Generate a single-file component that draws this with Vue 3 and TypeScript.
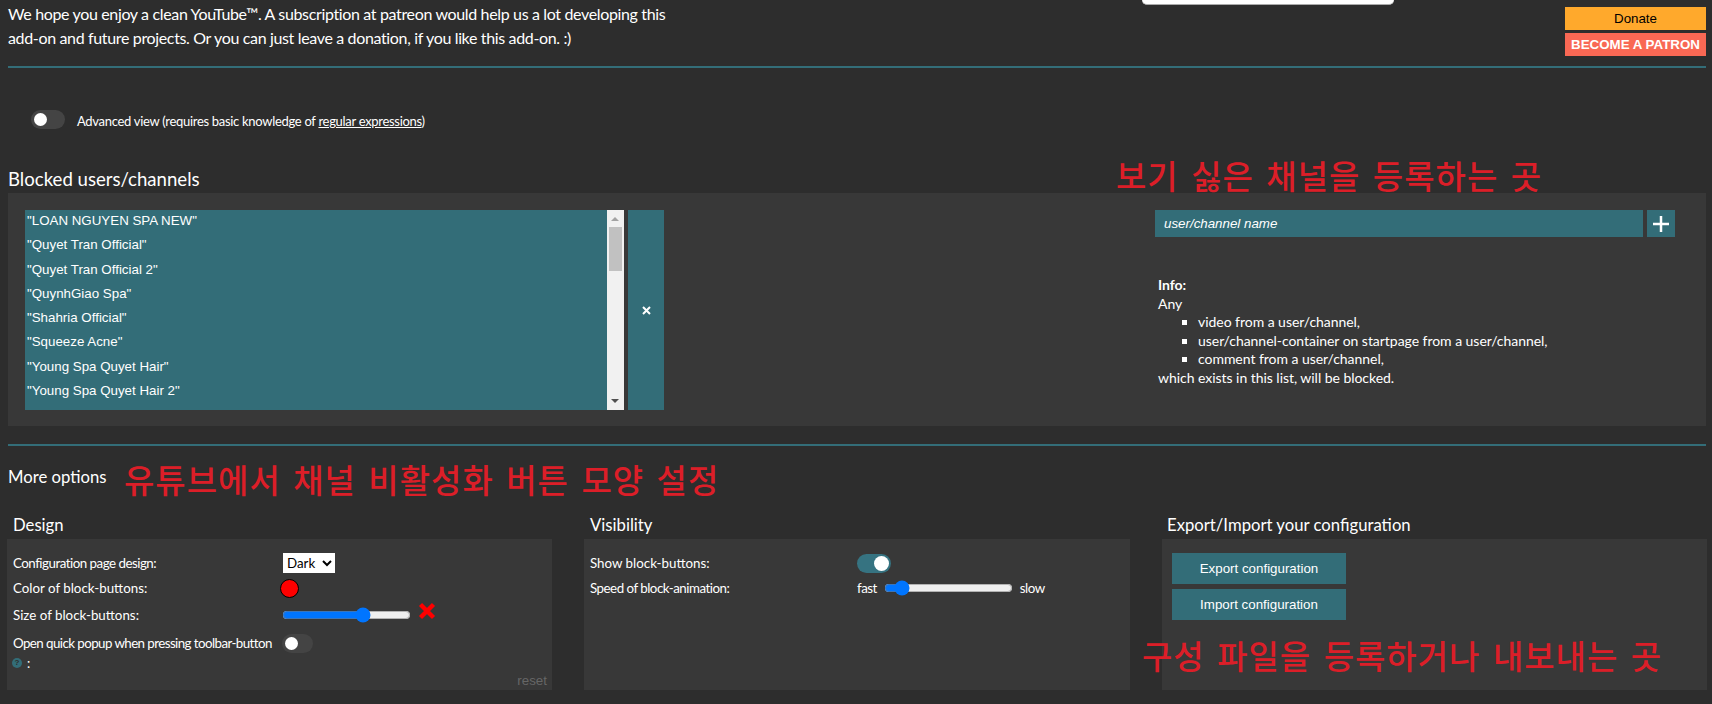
<script setup lang="ts">
const channels: string[] = [
  '"LOAN NGUYEN SPA NEW"',
  '"Quyet Tran Official"',
  '"Quyet Tran Official 2"',
  '"QuynhGiao Spa"',
  '"Shahria Official"',
  '"Squeeze Acne"',
  '"Young Spa Quyet Hair"',
  '"Young Spa Quyet Hair 2"',
]
const infoItems: string[] = [
  'video from a user/channel,',
  'user/channel-container on startpage from a user/channel,',
  'comment from a user/channel,',
]
</script>

<template>
  <div class="page">
    <header class="top">
      <p class="intro">We hope you enjoy a clean YouTube™. A subscription at patreon would help us a lot developing this<br />add-on and future projects. Or you can just leave a donation, if you like this add-on. :)</p>
      <div class="search-stub"></div>
      <div class="support">
        <a class="donate">Donate</a>
        <a class="patron">BECOME A PATRON</a>
      </div>
    </header>
    <hr class="rule" />

    <div class="advanced">
      <span class="toggle"><i class="knob"></i></span>
      <span class="advanced-text">Advanced view (requires basic knowledge of <u>regular expressions</u>)</span>
    </div>

    <h2 class="blocked-title">Blocked users/channels</h2>
    <div class="note note-one">보기 싫은 채널을 등록하는 곳</div>

    <section class="panel blocked">
      <div class="list-wrap">
        <ul class="list">
          <li v-for="c in channels" :key="c">{{ c }}</li>
        </ul>
        <div class="scrollbar">
          <span class="arrow up"></span>
          <span class="thumb"></span>
          <span class="arrow down"></span>
        </div>
      </div>
      <button class="remove" type="button" aria-label="remove">
        <svg width="9" height="9" viewBox="0 0 9 9"><path d="M1 1l7 7M8 1l-7 7" stroke="#fff" stroke-width="2" /></svg>
      </button>
      <div class="right">
        <div class="add-row">
          <div class="name-input">user/channel name</div>
          <button class="add" type="button" aria-label="add">
            <svg width="16" height="16" viewBox="0 0 16 16"><path d="M8 0v16M0 8h16" stroke="#fff" stroke-width="2.5" /></svg>
          </button>
        </div>
        <div class="info">
          <strong>Info:</strong>
          <div>Any</div>
          <ul>
            <li v-for="i in infoItems" :key="i">{{ i }}</li>
          </ul>
          <div>which exists in this list, will be blocked.</div>
        </div>
      </div>
    </section>

    <hr class="rule second" />

    <div class="more">
      <h3>More options</h3>
      <div class="note note-two">유튜브에서 채널 비활성화 버튼 모양 설정</div>
    </div>

    <div class="cols">
      <div class="col">
        <h4>Design</h4>
        <div class="box">
          <div class="row r1">
            <span class="lbl tight">Configuration page design:</span>
            <select class="sel"><option>Dark</option></select>
          </div>
          <div class="row r2">
            <span class="lbl">Color of block-buttons:</span>
            <span class="swatch"></span>
          </div>
          <div class="row r3">
            <span class="lbl">Size of block-buttons:</span>
            <input class="range" type="range" min="0" max="100" value="65" />
            <svg class="cross" width="18" height="18" viewBox="0 0 18 18"><path d="M2.5 2.5l13 13M15.5 2.5l-13 13" stroke="#f00" stroke-width="4.4" /></svg>
          </div>
          <div class="row r4">
            <span class="lbl nowrap">Open quick popup when pressing toolbar-button</span>
            <span class="toggle small"><i class="knob"></i></span>
          </div>
          <div class="help"><span class="q">?</span><span class="colon">:</span></div>
          <span class="reset">reset</span>
        </div>
      </div>

      <div class="col">
        <h4>Visibility</h4>
        <div class="box vis">
          <div class="row r1">
            <span class="lbl">Show block-buttons:</span>
            <span class="toggle on"><i class="knob"></i></span>
          </div>
          <div class="row r2">
            <span class="lbl tight">Speed of block-animation:</span>
            <span class="speed">
              <span class="tight">fast</span>
              <input class="range" type="range" min="0" max="100" value="9" />
              <span class="tight">slow</span>
            </span>
          </div>
        </div>
      </div>

      <div class="col">
        <h4 class="last">Export/Import your configuration</h4>
        <div class="box export">
          <button class="cfg" type="button">Export configuration</button>
          <button class="cfg" type="button">Import configuration</button>
          <div class="note note-three">구성 파일을 등록하거나 내보내는 곳</div>
        </div>
      </div>
    </div>
  </div>
</template>

<style>
html, body { margin: 0; background: #2d2d2d; }
</style>

<style scoped>
.page {
  position: relative;
  box-sizing: border-box;
  width: 1712px;
  height: 704px;
  overflow: hidden;
  padding: 0 6px 0 8px;
  background: #2d2d2d;
  color: #fff;
  font-family: Lato, "Noto Sans", sans-serif;
  font-size: 14px;
}
.top { display: flex; height: 66px; }
.intro { margin: 2px 0 0; width: 700px; font-size: 16px; letter-spacing: -0.35px; line-height: 24px; }
.search-stub {
  box-sizing: border-box;
  width: 252px;
  height: 5px;
  margin-left: 434px;
  background: #fff;
  border-bottom: 1px solid #aaa;
  border-radius: 0 0 8px 8px;
}
.support { display: flex; flex-direction: column; gap: 3px; margin: 7px 0 0 auto; width: 141px; font-family: "Liberation Sans", Arial, sans-serif; text-align: center; font-size: 13.33px; }
.donate { height: 23px; line-height: 23px; background: #ffa92c; color: #000; }
.patron { height: 23px; line-height: 23px; background: #f96854; color: #fff; font-weight: 700; }
.rule { margin: 0; border: 0; height: 2px; background: #336d78; }
.second { margin-top: 18px; }
.advanced { display: flex; align-items: center; margin: 42px 0 0 23px; height: 19px; }
.advanced-text { margin: 3px 0 0 12px; font-size: 13px; letter-spacing: -0.3px; }
.toggle { position: relative; display: inline-block; flex: none; width: 34px; height: 19px; border-radius: 10px; background: #444; }
.toggle.small { width: 31px; margin-left: -1px; }
.toggle.on { background: #367381; }
.knob { position: absolute; left: 3px; top: 3px; width: 13px; height: 13px; border-radius: 50%; background: #fff; }
.toggle.on .knob { left: auto; right: 2px; top: 2px; width: 15px; height: 15px; }
.blocked-title { margin: 37px 0 1px; height: 26px; font-size: 18.6px; line-height: 26px; font-weight: 400; }
.note { position: absolute; color: #dc1e28; font-family: "Noto Sans CJK KR", sans-serif; font-weight: 500; font-size: 33px; line-height: 34px; white-space: nowrap; letter-spacing: 1px; word-spacing: 4px; }
.note-one { left: 1116px; top: 158px; }
.panel { position: relative; box-sizing: border-box; background: #383838; }
.blocked { display: flex; height: 233px; padding: 17px 0 0 17px; }
.list-wrap { display: flex; width: 599px; height: 200px; }
.list { flex: 1; margin: 0; padding: 0; list-style: none; background: #336d78; font-family: "Liberation Sans", Arial, sans-serif; font-size: 13.33px; }
.list li { height: 24.3px; line-height: 22.5px; padding-left: 2px; }
.scrollbar { position: relative; width: 17px; background: #f1f1f1; }
.thumb { position: absolute; left: 2px; top: 17px; width: 13px; height: 44px; background: #c1c1c1; }
.arrow { position: absolute; left: 4px; width: 0; height: 0; border-left: 4px solid transparent; border-right: 4px solid transparent; }
.arrow.up { top: 7px; border-bottom: 4px solid #a3a3a3; }
.arrow.down { bottom: 7px; border-top: 4px solid #505050; }
.remove { display: flex; align-items: center; justify-content: center; width: 36px; height: 200px; margin-left: 4px; padding: 0; border: 0; background: #336d78; }
.right { margin-left: 491px; }
.add-row { display: flex; gap: 4px; }
.name-input { box-sizing: border-box; width: 488px; height: 27px; padding-left: 9px; background: #336d78; font: italic 13.33px/27px "Liberation Sans", Arial, sans-serif; }
.add { display: flex; align-items: center; justify-content: center; width: 28px; height: 27px; padding: 0; border: 0; background: #336d78; }
.info { margin: 39px 0 0 3px; font-size: 14px; letter-spacing: -0.04px; line-height: 18.5px; }
.info strong { display: block; }
.info ul { margin: 0; padding-left: 40px; list-style: square; }
.more { position: relative; display: flex; align-items: center; box-sizing: border-box; height: 66px; padding-bottom: 4px; }
.more h3 { margin: 0; font-size: 16.7px; font-weight: 400; }
.note-two { left: 116px; top: 16px; }
.cols { display: grid; grid-template-columns: 545px 546px 545px; column-gap: 32px; margin: -1px 0 0 -1px; }
.col h4 { margin: 0 0 0 6px; height: 28px; font-size: 16.7px; line-height: 29px; font-weight: 400; }
.col h4.last { margin-left: 5px; }
.box { position: relative; box-sizing: border-box; height: 151px; background: #383838; font-size: 13.33px; }
.row { position: absolute; left: 6px; right: 0; display: flex; align-items: center; height: 20px; }
.lbl { flex: none; width: 270px; }
.vis .lbl { width: 267px; }
.tight { letter-spacing: -0.5px; }
.nowrap { white-space: nowrap; letter-spacing: -0.57px; }
.r1 { top: 14px; }
.r2 { top: 39px; }
.r3 { top: 66px; }
.r4 { top: 94px; }
.sel { box-sizing: border-box; width: 52px; height: 20px; margin: 0; border: 0; border-radius: 0; background: #fff; color: #000; font-family: Lato, sans-serif; font-size: 13.33px; }
.swatch { box-sizing: border-box; width: 19px; height: 19px; margin-left: -3px; border: 1px solid #000; border-radius: 50%; background: #f00; }
.range { width: 129px; height: 16px; margin: 0 0 0 -1px; }
.cross { margin: -8px 0 0 7px; }
.help { position: absolute; left: 5px; top: 118px; display: flex; align-items: center; gap: 5px; height: 12px; }
.q { width: 10px; height: 10px; border-radius: 50%; background: #336d78; color: #2d2d2d; font: 700 8px/10px "Liberation Sans", sans-serif; text-align: center; }
.colon { font-size: 13px; line-height: 12px; }
.reset { position: absolute; right: 5px; bottom: 1px; color: #666; font: 13.33px/17px "Liberation Sans", Arial, sans-serif; }
.speed { display: flex; align-items: center; gap: 7px; }
.speed .range { margin-left: 0; }
.export { display: flex; flex-direction: column; align-items: flex-start; gap: 5px; padding: 14px 0 0 10px; }
.cfg { width: 174px; height: 31px; padding: 0; border: 0; background: #336d78; color: #fff; font: 13.33px "Liberation Sans", Arial, sans-serif; }
.note-three { left: -20px; top: 99px; }
</style>
